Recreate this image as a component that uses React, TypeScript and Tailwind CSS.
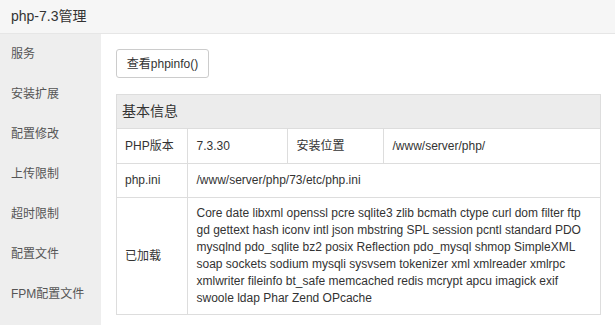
import React from 'react'

const MENU = ['服务', '安装扩展', '配置修改', '上传限制', '超时限制', '配置文件', 'FPM配置文件']

const EXTENSIONS =
  'Core date libxml openssl pcre sqlite3 zlib bcmath ctype curl dom filter ftp gd gettext hash iconv intl json mbstring SPL session pcntl standard PDO mysqlnd pdo_sqlite bz2 posix Reflection pdo_mysql shmop SimpleXML soap sockets sodium mysqli sysvsem tokenizer xml xmlreader xmlrpc xmlwriter fileinfo bt_safe memcached redis mcrypt apcu imagick exif swoole ldap Phar Zend OPcache'

export default function App() {
  return (
    <div
      className="w-[615px] h-[325px] overflow-hidden bg-white text-[#333]"
      style={{ fontFamily: '"Liberation Sans", "Noto Sans CJK SC", sans-serif' }}
    >
      <div className="h-[34px] bg-[#f6f6f6] border-b border-[#e6e6e6] flex items-center px-[11px] text-[14px] text-[#333]">
        php-7.3管理
      </div>
      <div className="flex h-[291px]">
        <div className="w-[101px] shrink-0 bg-[#eeeeee]">
          {MENU.map((m) => (
            <div key={m} className="h-10 flex items-center px-[11px] text-[12px] text-[#555] whitespace-nowrap">
              {m}
            </div>
          ))}
        </div>
        <div className="flex-1 pl-[15px] pr-[14px] pt-[15px]">
          <button className="h-[29px] w-[93px] border border-[#ccc] rounded-[3px] bg-white text-[12px] text-[#333]">
            查看phpinfo()
          </button>
          <div className="mt-[16px] border border-[#ddd]">
            <div className="h-[34px] bg-[#ececec] border-b border-[#ddd] flex items-center px-[5px] text-[14px] text-[#333]">
              基本信息
            </div>
            <table className="w-full table-fixed text-[12px] text-[#333] border-collapse">
              <tbody>
                <tr className="h-[34px]">
                  <td className="w-[70px] px-[8px] border-r border-b border-[#ddd] whitespace-nowrap">PHP版本</td>
                  <td className="w-[100px] px-[9px] border-r border-b border-[#ddd]">7.3.30</td>
                  <td className="w-[96px] px-[9px] border-r border-b border-[#ddd]">安装位置</td>
                  <td className="px-[9px] border-b border-[#ddd]">/www/server/php/</td>
                </tr>
                <tr className="h-[34px]">
                  <td className="px-[8px] border-r border-b border-[#ddd]">php.ini</td>
                  <td colSpan={3} className="px-[9px] border-b border-[#ddd]">
                    /www/server/php/73/etc/php.ini
                  </td>
                </tr>
                <tr className="h-[117px]">
                  <td className="px-[8px] border-r border-[#ddd]">已加载</td>
                  <td colSpan={3} className="px-[9px] py-[7px] leading-[17px]">
                    {EXTENSIONS}
                  </td>
                </tr>
              </tbody>
            </table>
          </div>
        </div>
      </div>
    </div>
  )
}
